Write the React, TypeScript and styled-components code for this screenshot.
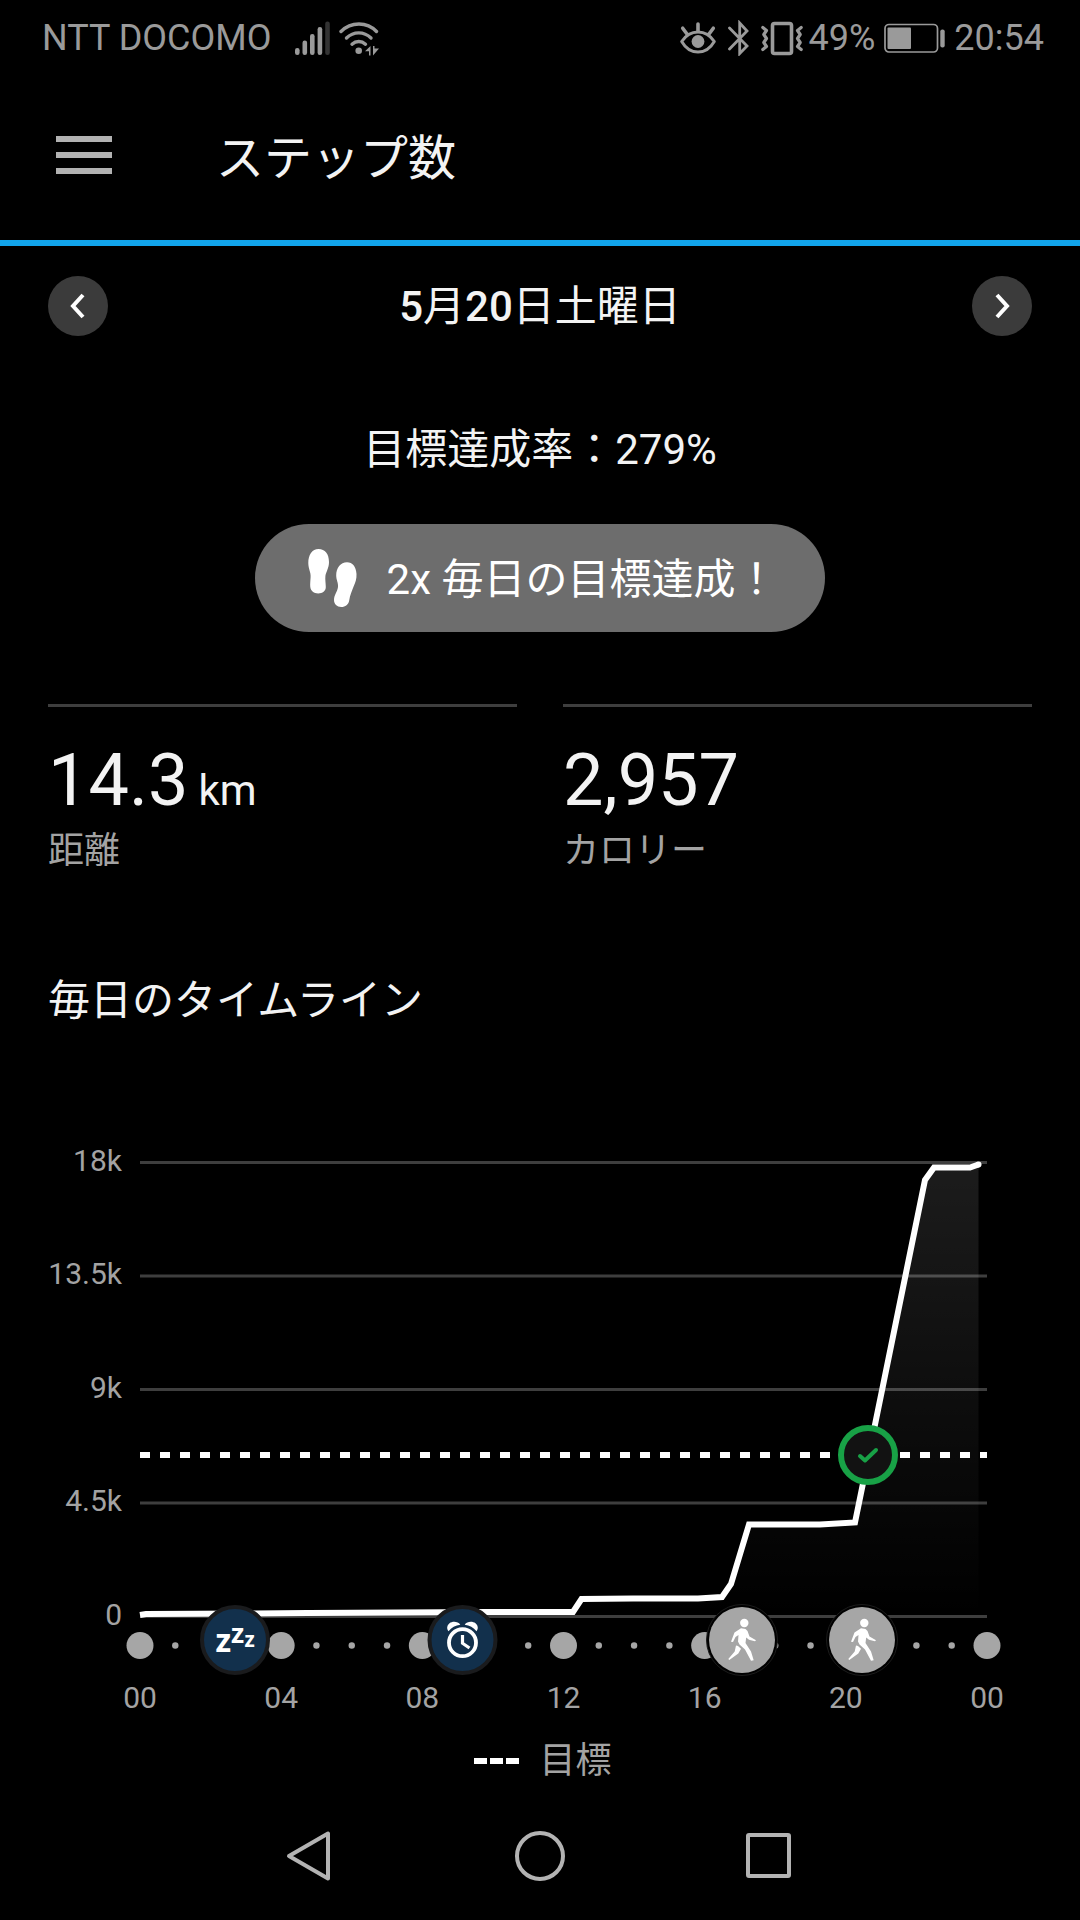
import React from "react";
import styled, { createGlobalStyle } from "styled-components";

const color = {
  bg: "#000",
  text: "#f3f3f3",
  muted: "#a3a3a3",
  status: "#9a9a9a",
  rule: "#3e3e3e",
  accent: "#12a5eb",
  goal: "#18a146",
  dot: "#a6a6a6",
};

const GlobalStyle = createGlobalStyle`
  *, *::before, *::after { box-sizing: border-box; }
  body {
    margin: 0;
    background: ${color.bg};
    color: ${color.text};
    font-family: Roboto, "Noto Sans CJK JP", sans-serif;
  }
  h1, h2, p, dl, dd, dt { margin: 0; font-weight: 400; }
  button { padding: 0; border: 0; background: none; color: inherit; font: inherit; cursor: pointer; }
  svg { display: block; flex: none; }
`;

const Screen = styled.div`
  display: flex;
  flex-direction: column;
  min-height: 100vh;
`;

const StatusBar = styled.div`
  display: flex;
  align-items: center;
  justify-content: space-between;
  padding: 2px 36px 0 42px;
  height: 74px;
  font-size: 36px;
  line-height: 42px;
  color: ${color.status};
`;

const StatusGroup = styled.div<{ $gap: number }>`
  display: flex;
  align-items: center;
  gap: ${(p) => p.$gap}px;
`;

const Carrier = styled.span`
  margin-right: 16px;
`;

const AppBar = styled.header`
  display: flex;
  align-items: center;
  gap: 104px;
  height: 172px;
  padding: 0 56px 4px;
  border-bottom: 6px solid ${color.accent};
`;

const MenuButton = styled.button`
  display: flex;
  flex-direction: column;
  gap: 10px;
  width: 56px;
`;

const MenuBar = styled.span`
  height: 6px;
  background: #b2b2b2;
`;

const Title = styled.h1`
  padding-top: 8px;
  font-size: 48px;
  line-height: 56px;
`;

const Main = styled.main`
  display: flex;
  flex-direction: column;
  padding: 30px 48px 0;
`;

const DateRow = styled.div`
  display: flex;
  align-items: center;
  justify-content: space-between;
`;

const RoundButton = styled.button`
  display: grid;
  place-items: center;
  width: 60px;
  height: 60px;
  border-radius: 50%;
  background: #3b3b3b;
`;

const DateText = styled.h2`
  padding-top: 2px;
  font-size: 42px;
  line-height: 48px;
`;

const Digits = styled.span`
  font-weight: 500;
`;

const GoalRate = styled.p`
  margin-top: 90px;
  font-size: 42px;
  line-height: 48px;
  text-align: center;
`;

const GoalPill = styled.div`
  display: flex;
  align-items: center;
  align-self: center;
  gap: 24px;
  height: 108px;
  margin-top: 50px;
  padding: 0 48px;
  border-radius: 54px;
  background: #6d6d6d;
  color: #fff;
  font-size: 42px;
  line-height: 48px;
  white-space: nowrap;
`;

const PillText = styled.span`
  padding-top: 4px;
`;

const Stats = styled.dl`
  display: grid;
  grid-template-columns: 1fr 1fr;
  gap: 46px;
  margin-top: 72px;
`;

const Stat = styled.div`
  display: flex;
  flex-direction: column-reverse;
  justify-content: flex-end;
  gap: 4px;
  padding-top: 32px;
  border-top: 3px solid ${color.rule};
`;

const StatValue = styled.dd`
  font-size: 72px;
  line-height: 84px;
`;

const StatUnit = styled.span`
  margin-left: 10px;
  font-size: 42px;
  line-height: 48px;
`;

const StatLabel = styled.dt`
  font-size: 36px;
  line-height: 48px;
  color: ${color.muted};
`;

const SectionTitle = styled.h2`
  margin-top: 102px;
  font-size: 42px;
  line-height: 48px;
`;

const Chart = styled.svg`
  width: 100%;
  height: auto;
  margin-top: 95px;
  overflow: visible;
`;

const AxisText = styled.text`
  font-size: 30px;
  fill: ${color.muted};
`;

const SleepText = styled.text`
  font-family: "Open Sans", "Noto Sans", sans-serif;
  font-weight: 700;
  fill: #fff;
`;

const Legend = styled.div`
  display: flex;
  align-items: center;
  justify-content: center;
  gap: 20px;
  padding: 17px 0 0 6px;
  font-size: 36px;
  line-height: 48px;
  color: ${color.muted};
`;

const LegendDashes = styled.span`
  display: flex;
  gap: 3px;
`;

const LegendDash = styled.span`
  width: 13px;
  height: 6px;
  background: #fff;
`;

const SystemNav = styled.nav`
  display: flex;
  justify-content: center;
  align-items: center;
  gap: 170px;
  margin-top: auto;
  height: 128px;
`;

const NavButton = styled.button`
  display: grid;
  place-items: center;
  width: 60px;
  height: 60px;
`;

const SignalIcon = () => (
  <svg width="36" height="36" viewBox="0 0 36 36" fill={color.status} aria-hidden="true">
    <rect x="0" y="28" width="4.6" height="7" rx="2.2" />
    <rect x="7.5" y="20.5" width="4.6" height="14.500" rx="2.2" />
    <rect x="15" y="14" width="4.6" height="21" rx="2.2" />
    <rect x="22.6" y="7" width="4.6" height="28" rx="2.2" />
    <rect x="30.2" y="1.5" width="4.6" height="33.5" rx="2.2" fill="#333" />
  </svg>
);

const WifiIcon = () => (
  <svg width="40" height="36" viewBox="0 0 40 36" fill="none" stroke={color.status} strokeWidth="3.4" strokeLinecap="round" aria-hidden="true">
    <path d="M2 11.5C12 1.500 28 1.500 37.500 11.500" />
    <path d="M7.500 18C14.500 11.200 25 11.200 32 18" />
    <path d="M13 24.200C17 20.500 22.500 20.500 26.500 24.200" />
    <circle cx="19.700" cy="30.700" r="3.300" fill={color.status} stroke="none" />
    <path d="M26 31.300L31.500 26V35.500H30V31.300ZM34 26H35.500V28.500H40L34 35.500Z" fill={color.status} stroke="none" />
  </svg>
);

const EyeIcon = () => (
  <svg width="36" height="36" viewBox="0 0 36 36" fill="none" stroke={color.status} strokeWidth="3" strokeLinecap="round" strokeLinejoin="round" aria-hidden="true">
    <path d="M1.700 21.500C6 15 12 12 18 12S30 15 34.300 21.500C30 29 24 32 18 32S6 29 1.700 21.500Z" />
    <path d="M18 4V11.500M2.700 8.200L7 14M33.300 8.200L29 14" strokeWidth="3.600" />
    <circle cx="18" cy="21.500" r="6.400" fill={color.status} stroke="none" />
  </svg>
);

const BluetoothIcon = () => (
  <svg width="21" height="36" viewBox="0 0 21 36" fill="none" stroke={color.status} strokeWidth="2.8" strokeLinecap="round" aria-hidden="true">
    <path d="M1.500 8L19 26L11.700 33.500V3L19 11L1.500 29" />
  </svg>
);

const VibrateIcon = () => (
  <svg width="42" height="36" viewBox="0 0 42 36" fill="none" stroke={color.status} strokeWidth="3.2" strokeLinecap="round" strokeLinejoin="round" aria-hidden="true">
    <rect x="11.500" y="3.500" width="19" height="30" rx="2" strokeWidth="3.6" />
    <path d="M1.800 7.500L5.500 10.500L2.800 14.500L5.500 18.500L2.800 22.500L5.500 26.500L1.800 29.500" />
    <path d="M40.200 7.500L36.500 10.500L39.200 14.500L36.500 18.500L39.200 22.500L36.500 26.500L40.200 29.500" />
  </svg>
);

const BatteryIcon = () => (
  <svg width="61" height="36" viewBox="0 0 61 36" fill={color.status} aria-hidden="true">
    <rect x="1" y="4.500" width="52.500" height="27.500" rx="4" fill="none" stroke={color.status} strokeWidth="1.7" />
    <rect x="3.500" y="7.500" width="23.500" height="21.500" rx="1" />
    <rect x="56.300" y="9.500" width="4.400" height="18" rx="2" />
  </svg>
);

const Chevron = ({ d }: { d: string }) => (
  <svg width="24" height="30" viewBox="0 0 24 30" fill="none" stroke="#fff" strokeWidth="4" aria-hidden="true">
    <path d={d} />
  </svg>
);

const FootprintsIcon = () => (
  <svg width="60" height="68" viewBox="0 0 60 68" fill="#fff" aria-hidden="true">
    <path d="M15.600 5C9 5 5.300 11 5.300 19C5.300 25 8 28 7.600 33C7.400 37 7 40 7.300 43C7.800 47 11 49.400 15.200 49.400C19.500 49.400 22.800 47 22.800 43C22.800 39 22 36 22.400 32C23 28 26 24 26 18C26 10 22 5 15.600 5Z" />
    <path d="M44 18.300C37.500 18.300 33.200 24 33.200 31.500C33.200 36 35.500 39 35 43C34.300 48 31 51 31 56C31 60 34 63 38.200 63C42.500 63 45.500 60.500 46.200 56.500C47 51 49 47 50.800 42C52.500 38 53.700 35 53.500 30C53 22.500 49.500 18.300 44 18.300Z" />
  </svg>
);

/* Chart geometry, in viewBox units */
const PLOT = { left: 92, right: 939, top: 42.5, bottom: 496.5 };
const MAX_STEPS = 18000;
const GOAL_Y = 335;
const AXIS_Y = 525.5;

const hourX = (h: number) => PLOT.left + ((PLOT.right - PLOT.left) * h) / 24;
const stepsY = (s: number) => PLOT.bottom - ((PLOT.bottom - PLOT.top) * s) / MAX_STEPS;

const TICKS = [
  { steps: 18000, label: "18k" },
  { steps: 13500, label: "13.5k" },
  { steps: 9000, label: "9k" },
  { steps: 4500, label: "4.5k" },
  { steps: 0, label: "0" },
];

const SERIES: [number, number][] = [
  [92, 495], [98, 494], [200, 493.5], [260, 493], [440, 492], [525, 492],
  [533.5, 479], [585, 478.5], [650, 478.5], [674, 477], [683, 464],
  [701, 404.5], [772, 404.5], [807, 402.5], [877, 60],
  [886, 47.5], [922, 47.5], [930.5, 44.5],
];
const LINE = "M" + SERIES.map(([x, y]) => `${x} ${y}`).join("L");
const AREA = `${LINE}V${PLOT.bottom}H${PLOT.left}Z`;

const HOURS = Array.from({ length: 25 }, (_, h) => h);

const WalkBadge = ({ x }: { x: number }) => (
  <g transform={`translate(${x} 520)`}>
    <circle r="35.5" fill="#000" stroke="#1c1c1c" strokeWidth="1" />
    <circle r="33" fill={color.dot} />
    <g fill="#fff">
      <circle cx="2.300" cy="-17" r="4.200" />
      <path d="M-1-11.700L-7.500-7.500L-11 1.700L-9 2L-6.500-3L-3.500-5L-4 1.500L-2.500 4.500L3 9.500L9 20.700L11.700 20.300L9 11.500L3.500 3L4.200-2.500L7-.3L13 1.200L14 .3L7.500-3.500L5.500-9L3.500-11Z" />
      <path d="M-6 5.500L-7.300 11.500L-13.700 19L-12.700 20L-3.700 13.500L-1 8.800L-4 6Z" />
    </g>
  </g>
);

const SleepBadge = ({ x }: { x: number }) => (
  <g transform={`translate(${x} 520)`}>
    <circle r="33" fill="#12304c" stroke="#1a1b1d" strokeWidth="4" />
    <SleepText x="-19.5" y="11.5" fontSize="32">z</SleepText>
    <SleepText x="-4" y="3" fontSize="27">z</SleepText>
    <SleepText x="9.5" y="7" fontSize="21">z</SleepText>
  </g>
);

const AlarmBadge = ({ x }: { x: number }) => (
  <g transform={`translate(${x} 520)`}>
    <circle r="33" fill="#12304c" stroke="#1a1b1d" strokeWidth="4" />
    <g fill="none" stroke="#fff">
      <circle cy="2.700" r="13.500" strokeWidth="3.800" />
      <path d="M0-5V3.200L7 8" strokeWidth="3.200" />
    </g>
    <path d="M-14-8.700C-16-11-15.700-14.500-13-16.700C-10-19-4.500-18.700-2.200-15.300C-7-14.800-11-12.500-14-8.700Z" fill="#fff" />
    <path d="M14-8.700C16-11 15.700-14.500 13-16.700C10-19 4.500-18.700 2.200-15.300C7-14.800 11-12.500 14-8.700Z" fill="#fff" />
  </g>
);

const StepsChart = () => (
  <Chart viewBox="0 0 984 600" role="img" aria-label="毎日のタイムライン">
    <defs>
      <linearGradient id="area" x1="0" y1="0" x2="0" y2="1">
        <stop offset="0" stopColor="#fff" stopOpacity="0.11" />
        <stop offset="1" stopColor="#fff" stopOpacity="0" />
      </linearGradient>
    </defs>
    {TICKS.map(({ steps, label }) => (
      <g key={label}>
        <line x1={PLOT.left} x2={PLOT.right} y1={stepsY(steps)} y2={stepsY(steps)} stroke={color.rule} strokeWidth="3" />
        <AxisText x="74" y={stepsY(steps) + 8} textAnchor="end">{label}</AxisText>
      </g>
    ))}
    <path d={AREA} fill="url(#area)" />
    <line x1={PLOT.left} x2={PLOT.right} y1={GOAL_Y} y2={GOAL_Y} stroke="#fff" strokeWidth="6" strokeDasharray="10 10" />
    <path d={LINE} fill="none" stroke="#fff" strokeWidth="6" />
    <circle cx="930.5" cy="44.5" r="3" fill="#fff" />
    <circle cx="820" cy={GOAL_Y} r="27" fill="#121212" stroke={color.goal} strokeWidth="6" />
    <path d="M812 336L817 340.500L828 330" fill="none" stroke={color.goal} strokeWidth="4" strokeLinecap="round" strokeLinejoin="round" />
    {HOURS.map((h) => (
      <circle key={h} cx={hourX(h)} cy={AXIS_Y} r={h % 4 ? 3.2 : 13.5} fill={color.dot} />
    ))}
    {HOURS.filter((h) => h % 4 === 0).map((h) => (
      <AxisText key={h} x={hourX(h)} y="588" textAnchor="middle">{String(h % 24).padStart(2, "0")}</AxisText>
    ))}
    <SleepBadge x={187} />
    <AlarmBadge x={414.5} />
    <WalkBadge x={694} />
    <WalkBadge x={814} />
  </Chart>
);

export default function App() {
  return (
    <Screen lang="ja">
      <GlobalStyle />
      <StatusBar>
        <StatusGroup $gap={8}>
          <Carrier>NTT DOCOMO</Carrier>
          <SignalIcon />
          <WifiIcon />
        </StatusGroup>
        <StatusGroup $gap={9}>
          <StatusGroup $gap={6}>
            <StatusGroup $gap={12}>
              <EyeIcon />
              <BluetoothIcon />
              <VibrateIcon />
            </StatusGroup>
            <span>49%</span>
          </StatusGroup>
          <BatteryIcon />
          <time>20:54</time>
        </StatusGroup>
      </StatusBar>

      <AppBar>
        <MenuButton type="button" aria-label="メニュー">
          <MenuBar />
          <MenuBar />
          <MenuBar />
        </MenuButton>
        <Title>ステップ数</Title>
      </AppBar>

      <Main>
        <DateRow>
          <RoundButton type="button" aria-label="前の日">
            <Chevron d="M17 4L7 15L17 26" />
          </RoundButton>
          <DateText>
            <Digits>5</Digits>月<Digits>20</Digits>日土曜日
          </DateText>
          <RoundButton type="button" aria-label="次の日">
            <Chevron d="M7 4L17 15L7 26" />
          </RoundButton>
        </DateRow>

        <GoalRate>目標達成率：279%</GoalRate>

        <GoalPill>
          <FootprintsIcon />
          <PillText>2x 毎日の目標達成！</PillText>
        </GoalPill>

        <Stats>
          <Stat>
            <StatLabel>距離</StatLabel>
            <StatValue>
              14.3<StatUnit>km</StatUnit>
            </StatValue>
          </Stat>
          <Stat>
            <StatLabel>カロリー</StatLabel>
            <StatValue>2,957</StatValue>
          </Stat>
        </Stats>

        <SectionTitle>毎日のタイムライン</SectionTitle>
        <StepsChart />
        <Legend>
          <LegendDashes aria-hidden="true">
            <LegendDash />
            <LegendDash />
            <LegendDash />
          </LegendDashes>
          <span>目標</span>
        </Legend>
      </Main>

      <SystemNav>
        <NavButton type="button" aria-label="戻る">
          <svg width="50" height="54" viewBox="0 0 50 54" fill="none" stroke="#b3b3b3" strokeWidth="4" strokeLinejoin="round">
            <path d="M43 4.500V49.500L4 27Z" />
          </svg>
        </NavButton>
        <NavButton type="button" aria-label="ホーム">
          <svg width="54" height="54" viewBox="0 0 54 54" fill="none" stroke="#b3b3b3" strokeWidth="4">
            <circle cx="27" cy="27" r="23" />
          </svg>
        </NavButton>
        <NavButton type="button" aria-label="履歴">
          <svg width="50" height="50" viewBox="0 0 50 50" fill="none" stroke="#b3b3b3" strokeWidth="4" strokeLinejoin="round">
            <rect x="3" y="4" width="41" height="41" rx="1" />
          </svg>
        </NavButton>
      </SystemNav>
    </Screen>
  );
}
